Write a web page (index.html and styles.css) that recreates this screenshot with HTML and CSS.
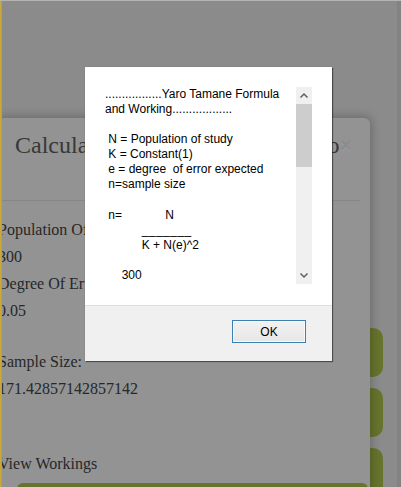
FILE: index.html
```html
<!DOCTYPE html>
<html>
<head>
<meta charset="utf-8">
<title>Yaro Tamane</title>
<link rel="stylesheet" href="styles.css">
</head>
<body>
<div class="page">
  <div class="tabs">
    <div class="tab"></div>
    <div class="tab"></div>
    <div class="tab"></div>
  </div>

  <div class="modal">
    <div class="modal-header">
      <h4 class="modal-title">Calculate Sample Size using Yaro</h4>
      <span class="close">×</span>
    </div>
    <div class="modal-body">
      <div class="group">
        <div class="line">Population Of Study</div>
        <div class="line">300</div>
        <div class="line">Degree Of Error</div>
        <div class="line">0.05</div>
      </div>
      <div class="group result">
        <div class="line">Sample Size:</div>
        <div class="line">171.42857142857142</div>
      </div>
      <div class="line link">View Workings</div>
      <div class="btn-green"></div>
    </div>
  </div>

  <div class="frame-edge"></div>

  <div class="alert">
    <div class="alert-body">
      <div class="alert-text">.................Yaro Tamane Formula
and Working..................

 N = Population of study
 K = Constant(1)
 e = degree  of error expected
 n=sample size

 n=             N
           <span class="rule">_______</span>
           K + N(e)^2

     300</div>
      <div class="sb">
        <div class="sb-btn"><svg width="16" height="17" viewBox="0 0 16 17"><path d="M4.5 10.5 L8 7 L11.5 10.5" fill="none" stroke="#606060" stroke-width="1.5"/></svg></div>
        <div class="sb-thumb"></div>
        <div class="sb-track"></div>
        <div class="sb-btn"><svg width="16" height="17" viewBox="0 0 16 17"><path d="M4.5 6.5 L8 10 L11.5 6.5" fill="none" stroke="#606060" stroke-width="1.5"/></svg></div>
      </div>
    </div>
    <div class="alert-foot">
      <button class="ok">OK</button>
    </div>
  </div>
</div>
</body>
</html>
```

FILE: styles.css
```css
html, body {
  margin: 0;
  padding: 0;
  overflow: hidden;
}

.page {
  position: relative;
  box-sizing: border-box;
  width: 401px;
  height: 487px;
  overflow: hidden;
  border-top: 1px solid #b4b4b4;
  background: linear-gradient(to left, #838383 0, #838383 4px, #8b8b8b 4px);
}

/* green buttons of the page behind the modal */
.tabs {
  display: flex;
  flex-direction: column;
  gap: 11px;
  padding-top: 327px;
}

.tab {
  width: 383px;
  height: 49px;
  background: #66742d;
  border-radius: 0 10px 10px 0;
}

/* the darkened bootstrap-like modal */
.modal {
  position: absolute;
  top: 117px;
  left: -2px;
  width: 372px;
  height: 400px;
  background: #939393;
  border-radius: 6px;
  box-shadow: 0 0 10px 2px rgba(0, 0, 0, 0.22);
  font-family: "Liberation Serif", "Times New Roman", serif;
}

.modal-header {
  display: flex;
  align-items: flex-start;
  height: 83px;
  box-sizing: border-box;
  margin-right: 10px;
  padding: 12px 0 0 17px;
  border-bottom: 1px solid #868686;
}

.modal-title {
  margin: 0;
  flex: none;
  white-space: nowrap;
  font-size: 24px;
  font-weight: normal;
  line-height: 30px;
  color: #383838;
}

.close {
  flex: none;
  font-family: "Liberation Sans", Arial, sans-serif;
  font-size: 21px;
  font-weight: bold;
  line-height: 30px;
  color: #8c8c8c;
  text-shadow: 0 1px 0 #9e9e9e;
}

.modal-body {
  padding-top: 15px;
}

.line {
  font-size: 16px;
  line-height: 27px;
  color: #272727;
  white-space: nowrap;
}

.result {
  margin-top: 24px;
}

.link {
  margin-top: 48px;
}

.btn-green {
  height: 40px;
  margin: 6px 2px 0 19px;
  background: #66742d;
  border-radius: 6px;
}

.frame-edge {
  position: absolute;
  top: -1px;
  bottom: 0;
  left: 0;
  width: 2px;
  background: linear-gradient(to right, #c9a83b 0, #c9a83b 1px, #b0a160 1px);
}

/* the alert() dialog */
.alert {
  position: absolute;
  top: 66px;
  left: 85px;
  width: 247px;
  height: 294px;
  display: flex;
  flex-direction: column;
  background: #ffffff;
  box-shadow: 1px 1px 1px rgba(0, 0, 0, 0.45), 0 0 1px rgba(0, 0, 0, 0.25);
  font-family: "Liberation Sans", Arial, sans-serif;
}

.alert-body {
  flex: 1;
  display: flex;
  align-items: flex-start;
  padding: 18px 20px 0 18px;
}

.alert-text {
  width: 193px;
  height: 199px;
  box-sizing: border-box;
  padding: 1.5px 0 0 2px;
  overflow: hidden;
  white-space: pre;
  font-size: 12px;
  line-height: 15.15px;
  color: #000000;
}

.rule {
  letter-spacing: 0.47px;
}

.sb {
  width: 16px;
  height: 197px;
  margin-top: 2px;
  display: flex;
  flex-direction: column;
  background: #f0f0f0;
}

.sb-btn {
  height: 17px;
  flex: none;
}

.sb-btn svg {
  display: block;
}

.sb-thumb {
  height: 63px;
  flex: none;
  background: #cdcdcd;
}

.sb-track {
  flex: 1;
}

.alert-foot {
  height: 56px;
  box-sizing: border-box;
  display: flex;
  justify-content: flex-end;
  align-items: flex-start;
  padding: 14px 26px 0 0;
  background: #f0f0f0;
  border-top: 1px solid #dfdfdf;
}

.ok {
  width: 74px;
  height: 23px;
  box-sizing: border-box;
  margin: 0;
  padding: 0;
  border: 1px solid #3c7fb1;
  background: linear-gradient(#f2f2f2, #e6e6e6);
  box-shadow: inset 0 0 0 1px rgba(255, 255, 255, 0.7);
  font-family: "Liberation Sans", Arial, sans-serif;
  font-size: 12px;
  color: #000000;
}
```
